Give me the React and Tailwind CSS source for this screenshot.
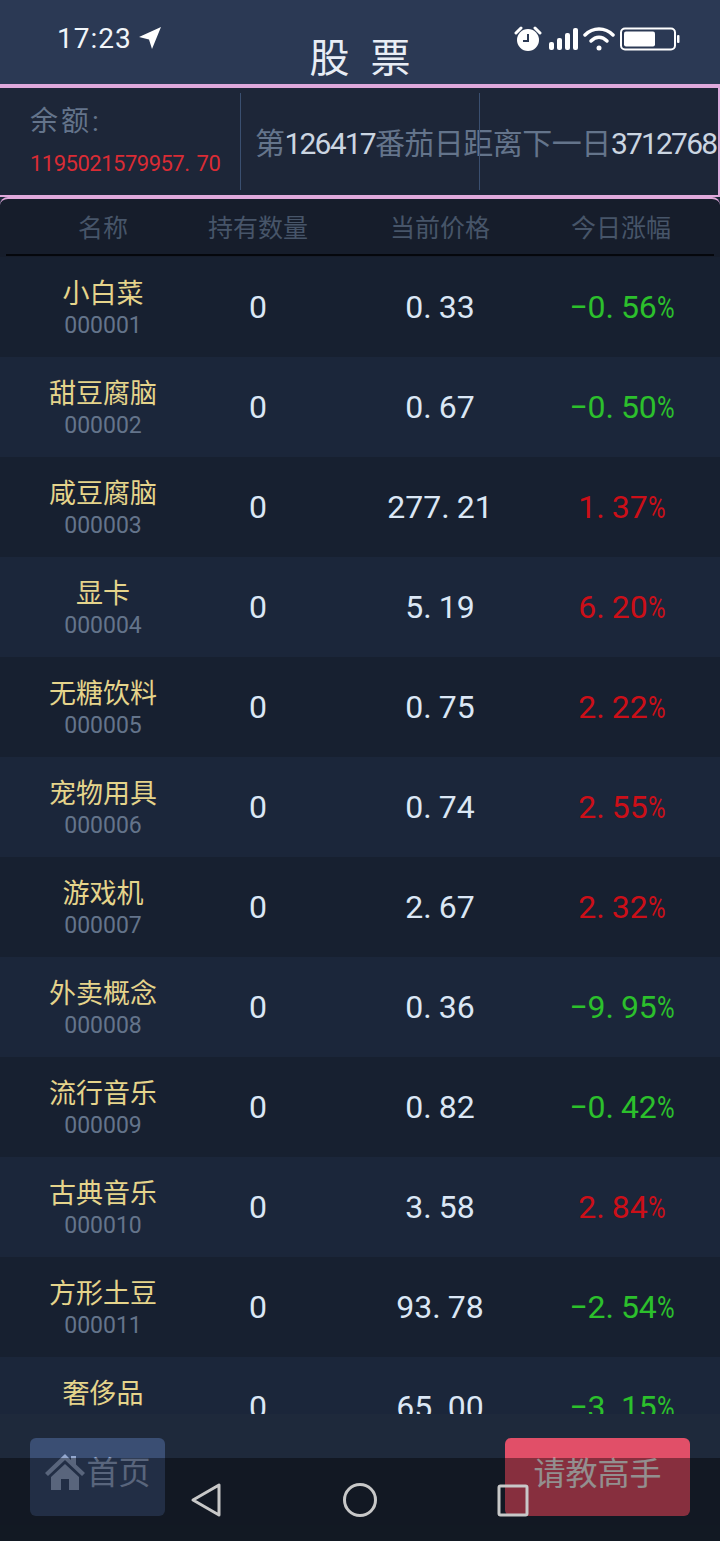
import React from "react";

const stocks = [
  { name: "小白菜", code: "000001", qty: 0, price: "0.33", change: "−0.56" },
  { name: "甜豆腐脑", code: "000002", qty: 0, price: "0.67", change: "−0.50" },
  { name: "咸豆腐脑", code: "000003", qty: 0, price: "277.21", change: "1.37" },
  { name: "显卡", code: "000004", qty: 0, price: "5.19", change: "6.20" },
  { name: "无糖饮料", code: "000005", qty: 0, price: "0.75", change: "2.22" },
  { name: "宠物用具", code: "000006", qty: 0, price: "0.74", change: "2.55" },
  { name: "游戏机", code: "000007", qty: 0, price: "2.67", change: "2.32" },
  { name: "外卖概念", code: "000008", qty: 0, price: "0.36", change: "−9.95" },
  { name: "流行音乐", code: "000009", qty: 0, price: "0.82", change: "−0.42" },
  { name: "古典音乐", code: "000010", qty: 0, price: "3.58", change: "2.84" },
  { name: "方形土豆", code: "000011", qty: 0, price: "93.78", change: "−2.54" },
  { name: "奢侈品", code: "000012", qty: 0, price: "65.00", change: "−3.15" },
];

// the dot in the screenshot font sits in a wide slot
const Num = ({ value }) => {
  const [a, b] = value.split(".");
  return (
    <span>
      {a}
      <span className="mr-[7px]">.</span>
      {b}
    </span>
  );
};

const StatusIcons = () => (
  <div className="flex items-center gap-[3px]">
    <svg width="28" height="28" viewBox="0 0 28 28" fill="none" className="mr-[3px]">
      <circle cx="14" cy="15" r="11" fill="#fff" />
      <path d="M14 9v7h-5" stroke="#2b3954" strokeWidth="2" />
      <path d="M2 8l5-5M26 8l-5-5" stroke="#fff" strokeWidth="3" strokeLinecap="round" />
    </svg>
    <svg width="32" height="24" viewBox="0 0 32 24" fill="#fff">
      <rect x="1" y="15" width="5" height="8" rx="2" />
      <rect x="9" y="11" width="5" height="12" rx="2" />
      <rect x="17" y="6" width="5" height="17" rx="2" />
      <rect x="25" y="1" width="5" height="22" rx="2" />
    </svg>
    <svg width="32" height="26" viewBox="0 0 32 26" fill="none" stroke="#fff" strokeWidth="3.5" strokeLinecap="round">
      <path d="M2 9c8-8 20-8 28 0" />
      <path d="M8 15c5-5 11-5 16 0" />
      <circle cx="16" cy="22" r="2.5" fill="#fff" stroke="none" />
    </svg>
    <svg width="60" height="24" viewBox="0 0 60 24" fill="none" className="ml-[2px]">
      <rect x="1" y="1.5" width="54" height="21" rx="4" stroke="#fff" strokeWidth="2" />
      <rect x="4" y="4.5" width="31" height="15" rx="2" fill="#fff" />
      <rect x="57" y="8" width="2.5" height="8" rx="1" fill="#fff" />
    </svg>
  </div>
);

const App = () => {
  return (
    <div
      className="relative flex flex-col w-[720px] h-[1541px] overflow-hidden bg-[#1e293b]"
      style={{ fontFamily: '"Roboto", "Noto Sans CJK SC", sans-serif' }}
    >
      {/* Header */}
      <header className="h-[84px] shrink-0 bg-[#2b3954] pt-[21px]">
        <div className="flex items-center justify-between h-[36px] pl-[57px] pr-[40px]">
          <div className="flex items-center gap-[6px] text-[28px] tracking-[1px] text-[#f1f5f9]">
            17:23
            <svg width="24" height="24" viewBox="0 0 24 24" fill="#fff" className="-mt-[3px]">
              <path d="M23 1L1 11l10 2.5L14 23z" />
            </svg>
          </div>
          <StatusIcons />
        </div>
        <h1 className="-mt-[20px] h-[44px] text-center text-[40px] leading-[44px] font-normal text-[#e8edf5] [word-spacing:11px]">
          股 票
        </h1>
      </header>

      {/* Balance strip */}
      <div className="flex h-[113px] shrink-0 overflow-hidden border-t-[4px] border-r-2 border-b-2 border-[#dfa9dc] bg-[#1d2638] py-[5px]">
        <div className="w-[240px] shrink-0 pl-[30px]">
          <div className="mt-[7px] h-[44px] text-[28px] leading-[44px] tracking-[3px] text-[#64748b]">余额:</div>
          <div className="mt-[5px] text-[22px] leading-[30px] tracking-[-0.5px] text-[#d92c35]">
            <Num value="1195021579957.70" />
          </div>
        </div>
        <div className="w-[239px] shrink-0 flex items-center border-l border-[#3a4f70] pl-[14px]">
          <p className="mt-[4px] whitespace-nowrap text-[30px] leading-[40px] tracking-[-0.5px] text-[#64748b]">
            第<span className="tracking-[-1.8px] text-[#cbd5e1]">126417</span>番茄日距离下一日<span className="tracking-[-1.8px] text-[#cbd5e1]">371276858</span>
          </p>
        </div>
        <div className="flex-1 border-l border-[#3a4f70]" />
      </div>

      {/* Stock list */}
      <section className="h-[1217px] shrink-0 overflow-hidden rounded-t-[8px] border-t-2 border-[#dfa9dc] bg-[#161d2b]">
        <div className="mx-[6px] mb-[1px] flex h-[57px] items-center border-b-2 border-[#05070c] pt-[5px] text-[25px] text-[#475569]">
          <div className="w-[194px] text-center">名称</div>
          <div className="w-[116px] whitespace-nowrap text-center">持有数量</div>
          <div className="w-[248px] text-center">当前价格</div>
          <div className="w-[114px] whitespace-nowrap text-center">今日涨幅</div>
        </div>
        {stocks.map((stock, i) => (
          <div
            key={stock.code}
            className={`flex h-[100px] items-center ${i % 2 === 0 ? "bg-[#172030]" : "bg-[#1b263a]"}`}
          >
            <div className="w-[206px] pt-[2px] text-center">
              <div className="text-[27px] leading-[36px] text-[#e5d48b]">{stock.name}</div>
              <div className="text-[23px] leading-[28px] text-[#64748b]">{stock.code}</div>
            </div>
            <div className="w-[104px] text-center text-[32px] text-[#dbe7f5]">{stock.qty}</div>
            <div className="ml-[40px] w-[180px] text-center text-[32px] text-[#dbe7f5]">
              <Num value={stock.price} />
            </div>
            <div
              className={`w-[186px] text-center text-[32px] ${
                stock.change.startsWith("−") ? "text-[#2cc02c]" : "text-[#cc0f18]"
              }`}
            >
              <Num value={stock.change} />
              <span className="inline-block w-[20px] origin-left scale-x-75">%</span>
            </div>
          </div>
        ))}
      </section>

      {/* Footer buttons */}
      <footer className="flex flex-1 items-start justify-between px-[30px] pt-[24px]">
        <button className="flex h-[78px] w-[135px] items-start justify-center rounded-[6px] bg-[#3a4e73] pt-[12px] text-[32px] leading-[46px] text-[#94a8cf]">
          <svg width="42" height="38" viewBox="0 0 42 38" fill="currentColor" className="mt-[3px]">
            <path d="M21 1L1 20l3 3L21 7l17 16 3-3-9-8.5V3h-5v4z" />
            <path d="M21 11L7 24v13h10V26h8v11h10V24z" />
          </svg>
          首页
        </button>
        <button className="h-[78px] w-[185px] rounded-[6px] bg-[#e14f68] pb-[7px] text-[32px] text-[#f5eeee]">
          请教高手
        </button>
      </footer>

      {/* System nav bar sits over the page */}
      <div className="absolute inset-x-0 bottom-0 flex h-[83px] items-center bg-black/40">
        <div className="flex w-full justify-between pl-[190px] pr-[191px]">
          <svg width="32" height="36" viewBox="0 0 32 36" fill="none" stroke="#c8c8c8" strokeWidth="3" strokeLinejoin="round">
            <path d="M29 3v30L3 18z" />
          </svg>
          <svg width="36" height="36" viewBox="0 0 36 36" fill="none" stroke="#c8c8c8" strokeWidth="3">
            <circle cx="18" cy="18" r="15.5" />
          </svg>
          <svg width="32" height="36" viewBox="0 0 32 36" fill="none" stroke="#c8c8c8" strokeWidth="3">
            <rect x="2" y="4" width="28" height="29" rx="1.5" />
          </svg>
        </div>
      </div>
    </div>
  );
};

export default App;
